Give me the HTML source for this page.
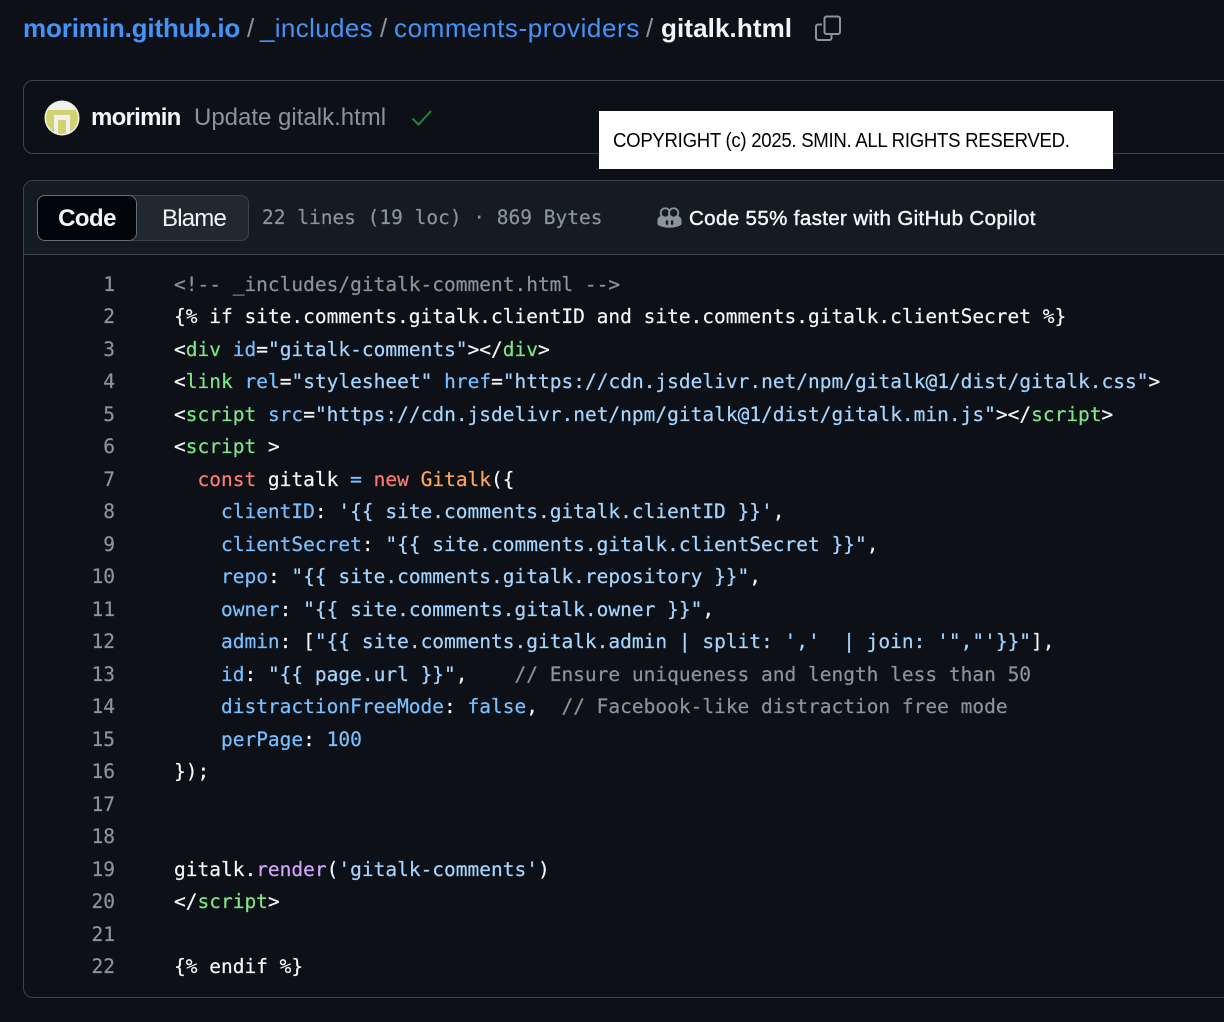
<!DOCTYPE html>
<html>
<head>
<meta charset="utf-8">
<style>
html,body{margin:0;padding:0;width:1224px;height:1022px;overflow:hidden;background:#0d1117;}
body{position:relative;font-family:"Liberation Sans",sans-serif;}
.a{position:absolute;white-space:pre;}
.bc{top:13px;height:30px;line-height:30px;font-size:26px;color:#4493f8;}
.sep{color:#8b949e;}
.ln,.cl{position:absolute;white-space:pre;font-family:"DejaVu Sans Mono",monospace;font-size:19.5px;height:32px;line-height:32px;-webkit-text-stroke:.2px currentColor;}
.ln{left:60px;width:55px;text-align:right;color:#8b949e;}
.cl{left:174px;color:#f0f6fc;}
.c{color:#8b949e}.g{color:#7ee787}.b{color:#79c0ff}.s{color:#a5d6ff}.r{color:#ff7b72}.o{color:#ffa657}.p{color:#d2a8ff}
</style>
</head>
<body>
<div class="a bc" style="left:23px;font-weight:bold;letter-spacing:-.14px">morimin.github.io</div>
<div class="a bc sep" style="left:247px">/</div>
<div class="a bc" style="left:260px;letter-spacing:.35px">_includes</div>
<div class="a bc sep" style="left:380px">/</div>
<div class="a bc" style="left:394px;letter-spacing:.57px">comments-providers</div>
<div class="a bc sep" style="left:646px">/</div>
<div class="a bc" style="left:661px;font-weight:bold;color:#f0f6fc;letter-spacing:.1px">gitalk.html</div>
<svg class="a" style="left:815px;top:15px" width="26" height="26" viewBox="0 0 26 26" fill="none" stroke="#8b949e" stroke-width="2"><path d="M7 9.500H3a2 2 0 0 0-2 2V23a2 2 0 0 0 2 2h11.500a2 2 0 0 0 2-2v-3"/><rect x="9.500" y="1.500" width="15.500" height="17.500" rx="2"/></svg>

<div class="a" style="left:23px;top:80px;width:1300px;height:72px;border:1px solid #3d444d;border-radius:10px"></div>
<svg class="a" style="left:44px;top:100px" width="36" height="36" viewBox="0 0 36 36"><defs><clipPath id="av"><circle cx="18" cy="18" r="16"/></clipPath></defs><circle cx="18" cy="18" r="17.500" fill="#f0f0ee"/><g clip-path="url(#av)"><rect x="2" y="10" width="32" height="24" fill="#d2d272"/><rect x="10" y="15" width="16" height="20" fill="#f0f0ee"/><rect x="14" y="20" width="8" height="16" fill="#d2d272"/></g></svg>
<div class="a" style="left:91px;top:104px;height:28px;line-height:28px;font-size:24px;font-weight:bold;color:#f0f6fc;letter-spacing:-.73px">morimin</div>
<div class="a" style="left:194px;top:104px;height:28px;line-height:28px;font-size:24px;color:#8b949e;letter-spacing:0">Update gitalk.html</div>
<svg class="a" style="left:411px;top:108px" width="22" height="20" viewBox="0 0 22 20" fill="none" stroke="#238636" stroke-width="2"><path d="M1.500 10.500L7.500 16.500L20 3"/></svg>

<div class="a" style="left:23px;top:180px;width:1300px;height:816px;border:1px solid #3d444d;border-radius:10px;background:#0d1117"></div>
<div class="a" style="left:24px;top:181px;width:1300px;height:73px;background:#151b23;border-bottom:1px solid #3d444d;border-radius:9px 0 0 0"></div>
<div class="a" style="left:37px;top:195px;width:210px;height:44px;background:#212830;border:1px solid #3d444d;border-radius:8px"></div>
<div class="a" style="left:37px;top:195px;width:98px;height:44px;background:#010409;border:1px solid #656c76;border-radius:8px"></div>
<div class="a" style="left:37px;top:205px;width:100px;text-align:center;height:28px;line-height:28px;font-size:24px;font-weight:bold;color:#f0f6fc;letter-spacing:-.55px">Code</div>
<div class="a" style="left:162px;top:205px;height:28px;line-height:28px;font-size:24px;color:#f0f6fc;letter-spacing:-.8px">Blame</div>
<div class="a" style="left:262px;top:203px;height:30px;line-height:30px;font-family:'DejaVu Sans Mono',monospace;font-size:19.500px;color:#8b949e;-webkit-text-stroke:.2px #8b949e">22 lines (19 loc) · 869 Bytes</div>
<svg class="a" style="left:657px;top:206px" width="25" height="23" viewBox="0 0 27 24"><path fill="#8b949e" d="M5 10C2 11 .5 13 .5 15v4c0 1.500 6 4 13 4s13-2.500 13-4v-4c0-2-1.500-4-4.500-5z"/><g fill="#151b23"><rect x="9.500" y="15" width="2.600" height="5" rx="1.200"/><rect x="15" y="15" width="2.600" height="5" rx="1.200"/></g><g fill="#151b23" stroke="#8b949e" stroke-width="2"><circle cx="9" cy="7" r="5"/><circle cx="18" cy="7" r="5"/></g></svg>
<div class="a" style="left:689px;top:206px;height:26px;line-height:26px;font-size:20.500px;color:#f0f6fc;letter-spacing:.37px;-webkit-text-stroke:.45px #f0f6fc">Code 55% faster with GitHub Copilot</div>

<div class="ln" style="top:269px">1</div><div class="cl" style="top:269px"><span class="c">&lt;!-- _includes/gitalk-comment.html --&gt;</span></div>
<div class="ln" style="top:301px">2</div><div class="cl" style="top:301px">{% if site.comments.gitalk.clientID and site.comments.gitalk.clientSecret %}</div>
<div class="ln" style="top:334px">3</div><div class="cl" style="top:334px">&lt;<span class="g">div</span> <span class="b">id</span>=<span class="s">"gitalk-comments"</span>&gt;&lt;/<span class="g">div</span>&gt;</div>
<div class="ln" style="top:366px">4</div><div class="cl" style="top:366px">&lt;<span class="g">link</span> <span class="b">rel</span>=<span class="s">"stylesheet"</span> <span class="b">href</span>=<span class="s">"https://cdn.jsdelivr.net/npm/gitalk@1/dist/gitalk.css"</span>&gt;</div>
<div class="ln" style="top:399px">5</div><div class="cl" style="top:399px">&lt;<span class="g">script</span> <span class="b">src</span>=<span class="s">"https://cdn.jsdelivr.net/npm/gitalk@1/dist/gitalk.min.js"</span>&gt;&lt;/<span class="g">script</span>&gt;</div>
<div class="ln" style="top:431px">6</div><div class="cl" style="top:431px">&lt;<span class="g">script</span> &gt;</div>
<div class="ln" style="top:464px">7</div><div class="cl" style="top:464px">  <span class="r">const</span> gitalk <span class="b">=</span> <span class="r">new</span> <span class="o">Gitalk</span>({</div>
<div class="ln" style="top:496px">8</div><div class="cl" style="top:496px">    <span class="b">clientID</span>: <span class="s">'{{ site.comments.gitalk.clientID }}'</span>,</div>
<div class="ln" style="top:529px">9</div><div class="cl" style="top:529px">    <span class="b">clientSecret</span>: <span class="s">"{{ site.comments.gitalk.clientSecret }}"</span>,</div>
<div class="ln" style="top:561px">10</div><div class="cl" style="top:561px">    <span class="b">repo</span>: <span class="s">"{{ site.comments.gitalk.repository }}"</span>,</div>
<div class="ln" style="top:594px">11</div><div class="cl" style="top:594px">    <span class="b">owner</span>: <span class="s">"{{ site.comments.gitalk.owner }}"</span>,</div>
<div class="ln" style="top:626px">12</div><div class="cl" style="top:626px">    <span class="b">admin</span>: [<span class="s">"{{ site.comments.gitalk.admin | split: ','  | join: '","'}}"</span>],</div>
<div class="ln" style="top:659px">13</div><div class="cl" style="top:659px">    <span class="b">id</span>: <span class="s">"{{ page.url }}"</span>,    <span class="c">// Ensure uniqueness and length less than 50</span></div>
<div class="ln" style="top:691px">14</div><div class="cl" style="top:691px">    <span class="b">distractionFreeMode</span>: <span class="b">false</span>,  <span class="c">// Facebook-like distraction free mode</span></div>
<div class="ln" style="top:724px">15</div><div class="cl" style="top:724px">    <span class="b">perPage</span>: <span class="b">100</span></div>
<div class="ln" style="top:756px">16</div><div class="cl" style="top:756px">});</div>
<div class="ln" style="top:789px">17</div>
<div class="ln" style="top:821px">18</div>
<div class="ln" style="top:854px">19</div><div class="cl" style="top:854px">gitalk.<span class="p">render</span>(<span class="s">'gitalk-comments'</span>)</div>
<div class="ln" style="top:886px">20</div><div class="cl" style="top:886px">&lt;/<span class="g">script</span>&gt;</div>
<div class="ln" style="top:919px">21</div>
<div class="ln" style="top:951px">22</div><div class="cl" style="top:951px">{% endif %}</div>

<div class="a" style="left:599px;top:111px;width:514px;height:58px;background:#fff"></div>
<div class="a" style="left:613px;top:128px;height:26px;line-height:26px;font-size:20px;color:#000;letter-spacing:-.3px;transform:scaleX(.929);transform-origin:0 0">COPYRIGHT (c) 2025. SMIN. ALL RIGHTS RESERVED.</div>
</body>
</html>
